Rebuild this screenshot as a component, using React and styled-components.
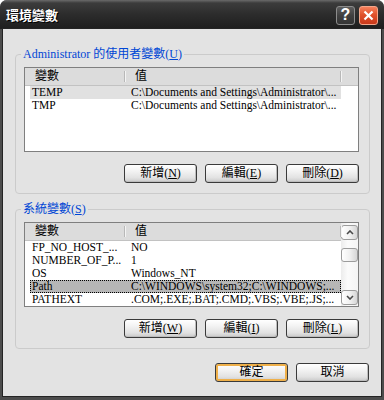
import styled, { createGlobalStyle } from 'styled-components'

const Global = createGlobalStyle`
  html, body {
    margin: 0;
    padding: 0;
    background: #ffffff;
  }
  body {
    font-family: "Liberation Serif", "Noto Sans CJK TC", serif;
    font-size: 12px;
  }
`

const Window = styled.div`
  width: 384px;
  height: 400px;
  box-sizing: border-box;
  display: flex;
  flex-direction: column;
  background: #4c4c4c;
  border-radius: 7px 7px 0 0;
  overflow: hidden;
`

const TitleBar = styled.div`
  flex: none;
  height: 29px;
  display: flex;
  align-items: center;
  justify-content: space-between;
  padding: 0 6px;
  background: linear-gradient(#6a6a6a 0, #3c3c3c 3px, #2c2c2c 50%, #1e1e1e 100%);
`

const Title = styled.span`
  color: #ffffff;
  font-family: "Noto Sans CJK TC", sans-serif;
  font-weight: 700;
  font-size: 13px;
  text-shadow: 1px 1px 0 #000;
`

const Caption = styled.div`
  display: flex;
  gap: 4px;
  margin-top: 1px;
`

const CapButton = styled.div`
  width: 19px;
  height: 19px;
  box-sizing: border-box;
  border-radius: 3px;
  border: 1px solid ${p => (p.$close ? '#f4a68a' : '#8c8c8c')};
  background: ${p =>
    p.$close
      ? 'linear-gradient(#f5805c, #e0522c 45%, #c8381a)'
      : 'linear-gradient(#5e5e5e, #404040 50%, #343434)'};
  display: flex;
  align-items: center;
  justify-content: center;
  color: #ffffff;
  font-family: "Liberation Sans", sans-serif;
  font-weight: 700;
  font-size: 16px;
  line-height: 1;
`

const Client = styled.div`
  flex: 1;
  margin: 0 3px 4px;
  background: #e3e3e3;
  box-shadow: 0 0 0 1px #242424;
  display: flex;
  flex-direction: column;
  padding: 0 11px 0 12px;
`

const Group = styled.fieldset`
  margin: ${p => p.$top}px 0 0;
  padding: 6px 10px 10px 8px;
  border: 1px solid #cbcbcb;
  border-radius: 4px;
  min-width: 0;
`

const Legend = styled.legend`
  padding: 0 2px;
  margin-left: -3px;
  color: #0046d5;
  font-size: 12px;
  line-height: 14px;
`

const List = styled.div`
  height: 85px;
  box-sizing: border-box;
  border: 1px solid #7f7f7f;
  background: #ffffff;
  display: flex;
  overflow: hidden;
`

const ListMain = styled.div`
  flex: 1;
  min-width: 0;
`

const Header = styled.div`
  height: 18px;
  box-sizing: border-box;
  display: flex;
  background: #dcdcdc;
  border-bottom: 1px solid #c2c2c2;
`

const HeadCell = styled.div`
  position: relative;
  width: ${p => p.$w}px;
  box-sizing: border-box;
  padding-left: 10px;
  line-height: 17px;
  color: #000;
  &::after {
    content: '';
    position: absolute;
    right: 0;
    top: 3px;
    bottom: 3px;
    width: 1px;
    background: #b8b8b8;
    box-shadow: 1px 0 0 #f4f4f4;
  }
`

const Row = styled.div`
  display: flex;
  height: 13px;
  line-height: 13px;
  font-size: 11.5px;
  margin-left: 5px;
  width: 311px;
  color: #000;
  background: ${p => (p.$sel === 'focus' ? '#b6b6b6' : p.$sel ? '#e1e1e1' : 'transparent')};
  outline: ${p => (p.$sel === 'focus' ? '1px dotted #000' : 'none')};
  outline-offset: -1px;
`

const Cell = styled.div`
  width: ${p => (p.$w ? `${p.$w}px` : 'auto')};
  flex: ${p => (p.$w ? 'none' : 1)};
  box-sizing: border-box;
  padding-left: 2px;
  white-space: nowrap;
  overflow: hidden;
`

const ScrollBar = styled.div`
  width: 17px;
  flex: none;
  display: flex;
  flex-direction: column;
  padding: 1px 0;
  box-sizing: border-box;
  background: linear-gradient(to right, #ececec, #fbfbfb 40%, #f4f4f4);
`

const ScrollBtn = styled.div`
  height: ${p => p.$h || 15}px;
  margin-top: ${p => p.$mt || 0};
  box-sizing: border-box;
  border: 1px solid #9c9c9c;
  border-radius: 3px;
  background: linear-gradient(to right, #ffffff, #f1f1f1 50%, #d6d6d6);
  display: flex;
  align-items: center;
  justify-content: center;
`

const ButtonRow = styled.div`
  display: flex;
  justify-content: flex-end;
  gap: 8px;
  margin-top: 12px;
`

const Footer = styled(ButtonRow)`
  margin-top: 14px;
  margin-right: 1px;
`

const Button = styled.button`
  width: 73px;
  height: 19px;
  box-sizing: border-box;
  padding: 0;
  font-family: "Liberation Serif", "Noto Sans CJK TC", serif;
  font-size: 12px;
  line-height: 17px;
  color: #000;
  border: 1px solid #3a3a3a;
  border-radius: 3px;
  background: linear-gradient(#ffffff, #f3f3f3 35%, #e2e2e2 75%, #c9c9c9);
  box-shadow: ${p => (p.$default ? 'inset 0 0 0 2px #efb04a' : 'inset -1px -1px 0 #bdbdbd')};
`

const Chevron = ({ up }) => (
  <svg width="8" height="5" viewBox="0 0 8 5">
    <path
      d={up ? 'M1 4 L4 1 L7 4' : 'M1 1 L4 4 L7 1'}
      fill="none"
      stroke="#4a4a4a"
      strokeWidth="1.6"
    />
  </svg>
)

const userVars = [
  { name: 'TEMP', value: 'C:\\Documents and Settings\\Administrator\\...', sel: true },
  { name: 'TMP', value: 'C:\\Documents and Settings\\Administrator\\...' },
]

const sysVars = [
  { name: 'FP_NO_HOST_...', value: 'NO' },
  { name: 'NUMBER_OF_P...', value: '1' },
  { name: 'OS', value: 'Windows_NT' },
  { name: 'Path', value: 'C:\\WINDOWS\\system32;C:\\WINDOWS;...', sel: 'focus' },
  { name: 'PATHEXT', value: '.COM;.EXE;.BAT;.CMD;.VBS;.VBE;.JS;...' },
]

const VarRows = ({ rows }) =>
  rows.map(r => (
    <Row key={r.name} $sel={r.sel}>
      <Cell $w={99}>{r.name}</Cell>
      <Cell>{r.value}</Cell>
    </Row>
  ))

const Head = () => (
  <Header>
    <HeadCell $w={100}>變數</HeadCell>
    <HeadCell $w={216}>值</HeadCell>
  </Header>
)

export default function App() {
  return (
    <>
      <Global />
      <Window>
        <TitleBar>
          <Title>環境變數</Title>
          <Caption>
            <CapButton>?</CapButton>
            <CapButton $close>
              <svg width="11" height="11" viewBox="0 0 11 11">
                <path d="M1.5 1.5 L9.5 9.5 M9.5 1.5 L1.5 9.5" stroke="#fff" strokeWidth="2.2" />
              </svg>
            </CapButton>
          </Caption>
        </TitleBar>
        <Client>
          <Group $top={18}>
            <Legend>
              Administrator 的使用者變數(<u>U</u>)
            </Legend>
            <List>
              <ListMain>
                <Head />
                <VarRows rows={userVars} />
              </ListMain>
            </List>
            <ButtonRow>
              <Button>新增(<u>N</u>)</Button>
              <Button>編輯(<u>E</u>)</Button>
              <Button>刪除(<u>D</u>)</Button>
            </ButtonRow>
          </Group>
          <Group $top={8}>
            <Legend>
              系統變數(<u>S</u>)
            </Legend>
            <List>
              <ListMain>
                <Head />
                <VarRows rows={sysVars} />
              </ListMain>
              <ScrollBar>
                <ScrollBtn $mt="1px">
                  <Chevron up />
                </ScrollBtn>
                <ScrollBtn $h={14} $mt="8px" />
                <ScrollBtn $mt="auto">
                  <Chevron />
                </ScrollBtn>
              </ScrollBar>
            </List>
            <ButtonRow>
              <Button>新增(<u>W</u>)</Button>
              <Button>編輯(<u>I</u>)</Button>
              <Button>刪除(<u>L</u>)</Button>
            </ButtonRow>
          </Group>
          <Footer>
            <Button $default>確定</Button>
            <Button>取消</Button>
          </Footer>
        </Client>
      </Window>
    </>
  )
}
